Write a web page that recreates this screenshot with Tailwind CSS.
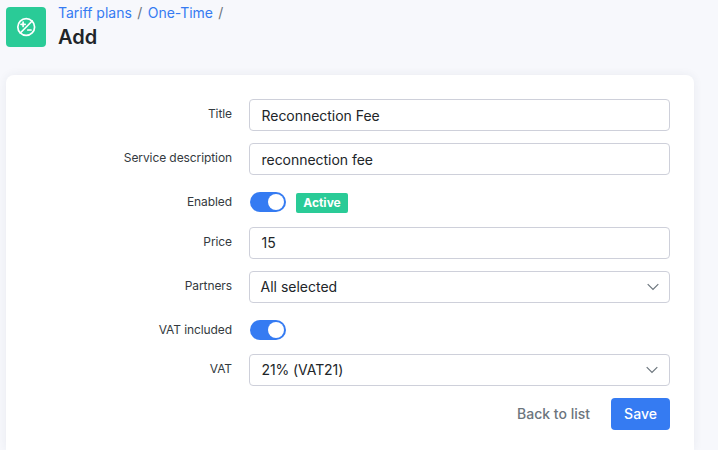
<!DOCTYPE html>
<html lang="en">
<head>
<meta charset="utf-8">
<title>Add tariff plan</title>
<script src="https://cdn.jsdelivr.net/npm/@tailwindcss/browser@4"></script>
</head>
<body class="h-[450px] w-[718px] overflow-hidden bg-[#f7f8fc] font-['Inter',sans-serif] text-sm text-[#212529]">
<div class="flex h-full flex-col pl-1.5 pr-6">
  <header class="flex h-[75px] shrink-0 gap-3 pt-[7px]">
    <div class="flex size-10 items-center justify-center rounded bg-[#2acb97]">
      <svg class="size-5" viewBox="0 0 20 20" fill="none" stroke="white" stroke-width="1.7" stroke-linecap="round">
        <circle cx="10.2" cy="10" r="8.4"/>
        <path d="M4.3 16 16.2 4M5 7.3h4.2M7.1 5.2v4.2M11.8 13h3.2"/>
      </svg>
    </div>
    <div>
      <nav class="mt-[-4px] flex h-5 items-center gap-[5.5px] whitespace-nowrap text-[#6c757d]">
        <a class="tracking-[-0.02px] text-[#357bf2]">Tariff plans</a><span>/</span><a class="tracking-[-0.05px] text-[#357bf2]">One-Time</a><span>/</span>
      </nav>
      <h1 class="mt-0.5 text-xl leading-6 font-semibold">Add</h1>
    </div>
  </header>
  <main class="flex-1 rounded-t-lg bg-white px-6 pt-6 shadow-[0_0_10px_rgba(40,50,90,0.07)]">
    <form class="grid grid-cols-[202px_421px] gap-x-[17px]">
      <label class="h-11 pt-[7px] text-right text-xs leading-4 tracking-[-0.09px] text-[#343a40]">Title</label>
      <div class="flex h-8 items-center rounded border border-[#ced0da] pt-0.5 pl-[11.5px] tracking-[-0.03px]">Reconnection Fee</div>
      <label class="h-11 pt-[7px] text-right text-xs leading-4 tracking-[-0.09px] text-[#343a40]">Service description</label>
      <div class="flex h-8 items-center rounded border border-[#ced0da] pt-0.5 pl-[11.5px] tracking-[-0.03px]">reconnection fee</div>
      <label class="h-10 pt-[7px] text-right text-xs leading-4 tracking-[-0.09px] text-[#343a40]">Enabled</label>
      <div class="flex h-8 items-center gap-2.5 pl-px">
        <span class="mt-[-2px] flex h-5 w-9 items-center justify-end rounded-full bg-[#357bf2] pr-0.5"><span class="size-4 rounded-full bg-white"></span></span>
        <span class="flex h-5 w-[52px] items-center justify-center rounded-xs bg-[#2acb97] text-xs font-bold text-white">Active</span>
      </div>
      <label class="h-11 pt-[7px] text-right text-xs leading-4 tracking-[-0.09px] text-[#343a40]">Price</label>
      <div class="flex h-8 items-center rounded border border-[#ced0da] pl-[11.5px]">15</div>
      <label class="h-11 pt-[7px] text-right text-xs leading-4 tracking-[-0.09px] text-[#343a40]">Partners</label>
      <div class="flex h-8 items-center justify-between rounded border border-[#ced0da] pr-[10.5px] pl-[10.5px]">All selected
        <svg class="h-2 w-3" viewBox="0 0 12 8" fill="none" stroke="#6c757d" stroke-width="1.2"><path d="m.7 1.2 5.3 5.3 5.3-5.3"/></svg>
      </div>
      <label class="h-[39px] pt-[7px] text-right text-xs leading-4 tracking-[-0.09px] text-[#343a40]">VAT included</label>
      <div class="pt-[5px] pl-px"><span class="flex h-5 w-9 items-center justify-end rounded-full bg-[#357bf2] pr-0.5"><span class="size-4 rounded-full bg-white"></span></span></div>
      <label class="h-11 pt-[7px] text-right text-xs leading-4 tracking-[-0.09px] text-[#343a40]">VAT</label>
      <div class="flex h-8 items-center justify-between rounded border border-[#ced0da] pr-[11.5px] pl-[11.5px] tracking-[-0.08px]">21% (VAT21)
        <svg class="h-2 w-3" viewBox="0 0 12 8" fill="none" stroke="#6c757d" stroke-width="1.2"><path d="m.7 1.2 5.3 5.3 5.3-5.3"/></svg>
      </div>
      <div class="col-start-2 flex items-center justify-end gap-[21px] font-medium">
        <a class="text-[#6c757d]">Back to list</a>
        <button type="button" class="h-8 w-[59px] rounded bg-[#357bf2] text-white">Save</button>
      </div>
    </form>
  </main>
</div>
</body>
</html>
